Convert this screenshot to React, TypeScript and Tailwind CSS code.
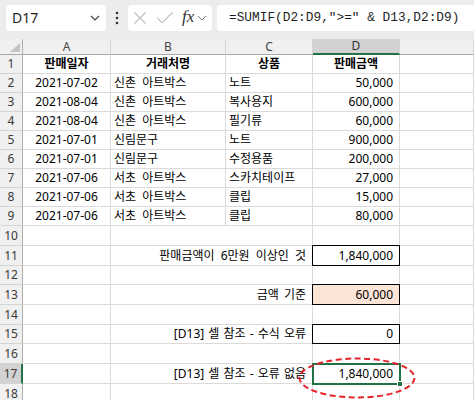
import React from "react";

type Cell = { t?: string; a?: "l" | "c" | "r"; b?: boolean };

const data: string[][] = [
  ["2021-07-02", "신촌 아트박스", "노트", "50,000"],
  ["2021-08-04", "신촌 아트박스", "복사용지", "600,000"],
  ["2021-08-04", "신촌 아트박스", "필기류", "60,000"],
  ["2021-07-01", "신림문구", "노트", "900,000"],
  ["2021-07-01", "신림문구", "수정용품", "200,000"],
  ["2021-07-06", "서초 아트박스", "스카치테이프", "27,000"],
  ["2021-07-06", "서초 아트박스", "클립", "15,000"],
  ["2021-07-06", "서초 아트박스", "클립", "80,000"],
];

const GRID = "border-r border-b border-[#dadada]";
const RH =
  "bg-[#f0f0f0] border-r border-b border-[#aeaeae] border-b-[#d5d5d5] flex items-center justify-center text-[12px] text-[#3a3a3a]";
const CH =
  "bg-[#f0f0f0] border-r border-b border-[#d5d5d5] border-b-[#a9a9a9] flex items-center justify-center text-[12px] text-[#444]";

function RowHead({ n, sel }: { n: number; sel?: boolean }) {
  return (
    <div
      className={
        sel
          ? "bg-[#d2d2d2] border-r-2 border-b border-r-[#217346] border-b-[#d5d5d5] flex items-center justify-center text-[12px] text-[#3a3a3a]"
          : RH
      }
    >
      {n}
    </div>
  );
}

function DataCell({ t, a, b }: Cell) {
  const al = a === "c" ? "justify-center" : a === "r" ? "justify-end pr-[6px]" : "justify-start pl-[3px]";
  return (
    <div className={`${GRID} flex items-center whitespace-nowrap overflow-visible text-[12px] text-black ${al} ${b ? "font-bold" : ""}`}>
      {t}
    </div>
  );
}

function LabelRow({
  n,
  label,
  ws,
  children,
}: {
  n: number;
  label?: string;
  ws?: string;
  children?: React.ReactNode;
}) {
  return (
    <>
      <RowHead n={n} sel={n === 17} />
      <div className={GRID} />
      <div className={`${GRID} col-span-2 flex items-center justify-end pr-[6px] whitespace-nowrap text-[12px] text-black ${ws ?? ""}`}>
        {label}
      </div>
      {children ?? <div className={GRID} />}
      <div className={GRID} />
    </>
  );
}

function Boxed({ t, peach }: { t: string; peach?: boolean }) {
  return (
    <div
      className={`${GRID} relative flex items-center justify-end pr-[6px] text-[12px] text-black ${peach ? "bg-[#fce4d6]" : ""}`}
    >
      <div className="absolute -left-px -top-px -right-px -bottom-px border border-black" />
      <span className="relative">{t}</span>
    </div>
  );
}

export default function App() {
  return (
    <div className="w-[474px] h-[400px] overflow-hidden bg-white font-['Noto_Sans','Noto_Sans_CJK_KR',sans-serif] [word-spacing:3px]">
      {/* Formula bar */}
      <div className="h-[39px] bg-[#ececec] flex items-start pt-[5px] pl-[6px] overflow-hidden [word-spacing:0px]">
        <div className="w-[100px] h-[26px] shrink-0 bg-white rounded-[4px] flex items-center pl-[6px] pr-[6px] justify-between">
          <span className="text-[14px] text-[#1f1f1f] leading-none">D17</span>
          <svg width="10" height="6" viewBox="0 0 10 6">
            <path d="M1 1 L5 5 L9 1" fill="none" stroke="#444" strokeWidth="1.2" />
          </svg>
        </div>
        <div className="w-[22px] h-[26px] shrink-0 flex items-center justify-center">
          <svg width="4" height="14" viewBox="0 0 4 14">
            <circle cx="2" cy="2" r="1.3" fill="#333" />
            <circle cx="2" cy="7" r="1.3" fill="#333" />
            <circle cx="2" cy="12" r="1.3" fill="#333" />
          </svg>
        </div>
        <div className="w-[84px] h-[26px] shrink-0 bg-white rounded-[4px] flex items-center pl-[5px]">
          <svg width="14" height="12" viewBox="0 0 14 12">
            <path d="M1.5 0.5 L12.5 11.5 M12.5 0.5 L1.5 11.5" fill="none" stroke="#bdbdbd" strokeWidth="1.1" />
          </svg>
          <svg width="16" height="12" viewBox="0 0 16 12" className="ml-[10px]">
            <path d="M0.5 6 L5 10.8 L15.5 0.5" fill="none" stroke="#bdbdbd" strokeWidth="1.1" />
          </svg>
          <span className="ml-[9px] font-['Liberation_Serif',serif] italic text-[17px] leading-none text-[#333] -mt-[3px]">fx</span>
          <svg width="10" height="6" viewBox="0 0 10 6" className="ml-[3px]">
            <path d="M1 1 L5 5 L9 1" fill="none" stroke="#777" strokeWidth="1" />
          </svg>
        </div>
        <div className="w-[300px] h-[26px] shrink-0 ml-[5px] bg-white rounded-[4px] flex items-center pl-[12px]">
          <span className="font-['Liberation_Mono',monospace] text-[12.8px] text-[#1f1f1f] whitespace-nowrap">
            =SUMIF(D2:D9,"&gt;=" &amp; D13,D2:D9)
          </span>
        </div>
      </div>

      {/* Sheet grid */}
      <div className="grid grid-cols-[23px_88px_115px_87px_87px_1fr] grid-rows-[16px_repeat(9,19px)_20px_20px_19px_20px_20px_19px_20px_20px_20px_20px]">
        <div className="bg-[#f0f0f0] border-r border-b border-[#aeaeae] border-b-[#a9a9a9] relative">
          <svg width="10" height="9" viewBox="0 0 10 9" className="absolute left-[10px] top-[4px]">
            <path d="M10 0 L10 9 L0 9 Z" fill="#c4c4c4" />
          </svg>
        </div>
        <div className={CH}>A</div>
        <div className={CH}>B</div>
        <div className={CH}>C</div>
        <div className="bg-[#d2d2d2] border-r border-b-2 border-r-[#d5d5d5] border-b-[#217346] flex items-center justify-center text-[12px] text-[#333]">
          D
        </div>
        <div className={CH} />

        <RowHead n={1} />
        <DataCell t="판매일자" a="c" b />
        <DataCell t="거래처명" a="c" b />
        <DataCell t="상품" a="c" b />
        <DataCell t="판매금액" a="c" b />
        <DataCell />

        {data.map((r, i) => (
          <React.Fragment key={i}>
            <RowHead n={i + 2} />
            <DataCell t={r[0]} a="c" />
            <DataCell t={r[1]} a="l" />
            <DataCell t={r[2]} a="l" />
            <DataCell t={r[3]} a="r" />
            <DataCell />
          </React.Fragment>
        ))}

        <LabelRow n={10} />
        <LabelRow n={11} label="판매금액이 6만원 이상인 것">
          <Boxed t="1,840,000" />
        </LabelRow>
        <LabelRow n={12} />
        <LabelRow n={13} label="금액 기준" ws="[word-spacing:2px]">
          <Boxed t="60,000" peach />
        </LabelRow>
        <LabelRow n={14} />
        <LabelRow n={15} label="[D13] 셀 참조 - 수식 오류" ws="[word-spacing:1px]">
          <Boxed t="0" />
        </LabelRow>
        <LabelRow n={16} />
        <LabelRow n={17} label="[D13] 셀 참조 - 오류 없음" ws="[word-spacing:1px]">
          <div className={`${GRID} relative z-10 flex items-center justify-end pr-[6px] text-[12px] text-black`}>
            <span>1,840,000</span>
            <div className="absolute -left-px -top-px -right-[2px] -bottom-[2px] border-2 border-[#217346]">
              <div className="absolute -right-[4px] -bottom-[4px] w-[6px] h-[6px] bg-[#217346] border border-white" />
            </div>
            <svg width="118" height="42" viewBox="0 0 118 42" className="absolute left-[-15px] top-[-7px] overflow-visible">
              <ellipse cx="59" cy="21" rx="57.5" ry="19.5" fill="none" stroke="#e3242b" strokeWidth="2" strokeDasharray="6 3.5" />
            </svg>
          </div>
        </LabelRow>
        <LabelRow n={18} />
        <LabelRow n={19} />
      </div>
    </div>
  );
}
